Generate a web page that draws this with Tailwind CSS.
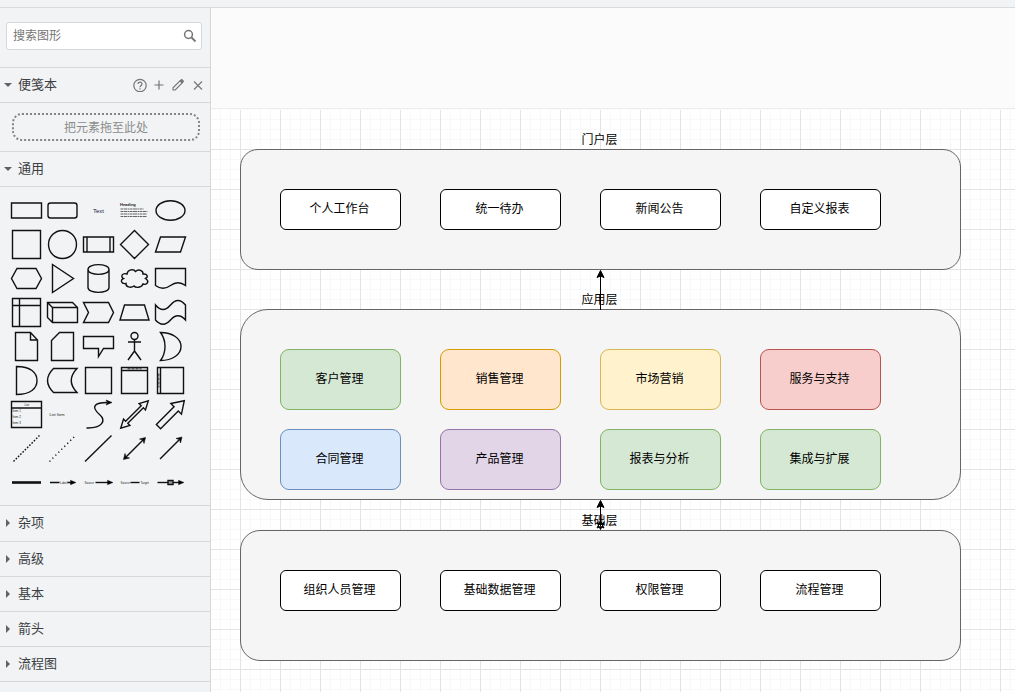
<!DOCTYPE html>
<html lang="zh-CN">
<head>
<meta charset="utf-8">
<meta name="viewport" content="width=device-width, initial-scale=1">
<title>架构图</title>
<script src="https://cdn.jsdelivr.net/npm/@tailwindcss/browser@4"></script>
</head>
<body class="flex h-screen flex-col overflow-hidden bg-[#fbfbfb] font-['Liberation_Sans','Noto_Sans_CJK_SC',sans-serif] text-[#3c4043]">
<header class="h-2 shrink-0 border-b border-[#d8dbdf] bg-[#f1f3f4]"></header>
<div class="flex min-h-0 flex-1">

<aside class="w-[211px] shrink-0 overflow-hidden border-r border-[#d5d7da] bg-[#f1f3f4] text-[13px] leading-5">
  <div class="border-b border-[#d5d7da] px-1.5 pt-3.5 pb-[17px] pr-2">
    <label class="flex h-7 items-center rounded-[3px] border border-[#d5d7da] bg-white pr-1 pl-1.5">
      <input type="text" placeholder="搜索图形" aria-label="搜索图形" class="min-w-0 flex-1 bg-transparent text-xs leading-4 outline-none placeholder:text-[#757575]">
      <svg class="size-3.5 shrink-0" viewBox="0 0 14 14" fill="none" stroke="#757575" stroke-width="1.5"><circle cx="5.5" cy="5.5" r="3.9"/><path d="M8.5 8.5L12.5 12.500" stroke-width="1.8"/></svg>
    </label>
  </div>

  <div class="flex h-[35px] items-center border-b border-[#d5d7da] pr-[5px]">
    <button class="flex flex-1 items-center gap-1.5 pl-1"><svg class="h-2 w-2" viewBox="0 0 8 8" fill="#5f6368"><path d="M0 2h8L4 6z"/></svg>便笺本</button>
    <div class="flex items-center gap-1.5 text-[#757575]">
      <button aria-label="帮助"><svg class="size-3.5" viewBox="0 0 14 14" fill="none" stroke="currentColor" stroke-width="1.2"><circle cx="7" cy="7.500" r="6.200"/><path d="M5 6.100C5 3.500 9 3.500 9 6C9 7.400 7 7.500 7 9.200M7 10.200V11.500"/></svg></button>
      <button aria-label="添加"><svg class="size-3" viewBox="0 0 12 12" stroke="currentColor" stroke-width="1.200"><path d="M1.500 6h9M6 1.500v9"/></svg></button>
      <button aria-label="编辑"><svg class="size-3.5" viewBox="0 0 14 14" fill="none" stroke="currentColor" stroke-width="1.100"><path d="M2 12V9.800L9 2.800L11.200 5L4.200 12z"/><path d="M9.500 2.500L10.800 1.500L12.500 3.200L11.500 4.500z" fill="currentColor"/></svg></button>
      <button aria-label="关闭"><svg class="size-3.5" viewBox="0 0 14 14" stroke="currentColor" stroke-width="1.100"><path d="M3 3.500l8 8M11 3.500l-8 8"/></svg></button>
    </div>
  </div>
  <div class="border-b border-[#d5d7da] py-2.5 pr-2.5 pl-3">
    <div class="relative flex h-7 items-center justify-center pt-0.5 text-xs text-[#8c8c8c]">
      <svg class="absolute inset-0 h-full w-full" fill="none" stroke="#858585" stroke-width="2" stroke-dasharray="2 2"><rect x="1" y="1" width="186" height="26" rx="9"/></svg>
      把元素拖至此处
    </div>
  </div>
  <div class="flex h-[35px] items-center border-b border-[#d5d7da]">
    <button class="flex flex-1 items-center gap-1.5 pl-1"><svg class="h-2 w-2" viewBox="0 0 8 8" fill="#5f6368"><path d="M0 2h8L4 6z"/></svg>通用</button>
  </div>

  <div id="shapes" class="grid grid-cols-[repeat(5,36px)] border-b border-[#d5d7da] pt-1.5 pb-1.5 pl-2"></div>

  <nav>
    <button class="flex h-9 w-full items-center gap-1.5 border-b border-[#d5d7da] pb-px pl-1"><svg class="h-2 w-2" viewBox="0 0 8 8" fill="#5f6368"><path d="M2 0v8l4-4z"/></svg>杂项</button>
    <button class="flex h-[35px] w-full items-center gap-1.5 border-b border-[#d5d7da] pl-1"><svg class="h-2 w-2" viewBox="0 0 8 8" fill="#5f6368"><path d="M2 0v8l4-4z"/></svg>高级</button>
    <button class="flex h-[35px] w-full items-center gap-1.5 border-b border-[#d5d7da] pl-1"><svg class="h-2 w-2" viewBox="0 0 8 8" fill="#5f6368"><path d="M2 0v8l4-4z"/></svg>基本</button>
    <button class="flex h-[35px] w-full items-center gap-1.5 border-b border-[#d5d7da] pl-1"><svg class="h-2 w-2" viewBox="0 0 8 8" fill="#5f6368"><path d="M2 0v8l4-4z"/></svg>箭头</button>
    <button class="flex h-[35px] w-full items-center gap-1.5 border-b border-[#d5d7da] pl-1"><svg class="h-2 w-2" viewBox="0 0 8 8" fill="#5f6368"><path d="M2 0v8l4-4z"/></svg>流程图</button>
  </nav>
</aside>

<main class="min-w-0 flex-1 pt-[100px]">
  <!-- Drawing page: free canvas with its grid -->
  <div class="relative h-full overflow-hidden border-t border-[#ececec] bg-white text-xs text-black">
    <svg class="absolute inset-0 h-full w-full">
      <defs>
        <pattern id="grid" x="29" y="40" width="40" height="40" patternUnits="userSpaceOnUse">
          <path d="M10.5 0V40M20.5 0V40M30.5 0V40M0 10.5H40M0 20.5H40M0 30.5H40" stroke="#f8f8f8"/>
          <path d="M.5 0V40M0 .5H40" stroke="#e3e3e3"/>
        </pattern>
      </defs>
      <rect y="1" width="100%" height="100%" fill="url(#grid)"/>
      <rect width="100%" height="1" fill="#fff"/>
      <rect x="0" y="0" width="100%" height="1" fill="#fbfbfb"/>
    </svg>

    <section class="absolute top-10 left-[29px] h-[121px] w-[721px] rounded-[18px] border border-[#666] bg-[#f5f5f5]"></section>
    <section class="absolute top-[200px] left-[29px] h-[191px] w-[721px] rounded-[28px] border border-[#666] bg-[#f5f5f5]"></section>
    <section class="absolute top-[421px] left-[29px] h-[131px] w-[721px] rounded-[20px] border border-[#666] bg-[#f5f5f5]"></section>

    <svg class="absolute top-0 left-[379px] h-[440px] w-5" viewBox="0 0 20 440" stroke="#000">
      <path d="M10.5 166V201M10.5 396V417"/>
      <path d="M10.5 161.500L14 168.500L10.5 167L7 168.500zM10.5 391.500L14 398.500L10.5 397L7 398.500zM10.5 420.500L14 413.500L10.5 415.500L7 413.500zM10.5 412L14 419L10.5 417.500L7 419z"/>
    </svg>

    <h2 class="absolute top-[21px] left-7 w-[721px] text-center leading-5">门户层</h2>
    <h2 class="absolute top-[181px] left-7 w-[721px] text-center leading-5">应用层</h2>
    <h2 class="absolute top-[402px] left-7 w-[721px] text-center leading-5">基础层</h2>

    <div class="absolute top-20 left-[69px] flex h-[41px] w-[121px] items-center justify-center rounded-md border border-black bg-white pr-0.5 pb-0.5">个人工作台</div>
    <div class="absolute top-20 left-[229px] flex h-[41px] w-[121px] items-center justify-center rounded-md border border-black bg-white pr-0.5 pb-0.5">统一待办</div>
    <div class="absolute top-20 left-[389px] flex h-[41px] w-[121px] items-center justify-center rounded-md border border-black bg-white pr-0.5 pb-0.5">新闻公告</div>
    <div class="absolute top-20 left-[549px] flex h-[41px] w-[121px] items-center justify-center rounded-md border border-black bg-white pr-0.5 pb-0.5">自定义报表</div>

    <div class="absolute top-60 left-[69px] flex h-[61px] w-[121px] items-center justify-center rounded-[9px] border border-[#82b366] bg-[#d5e8d4] pr-0.5 pb-0.5">客户管理</div>
    <div class="absolute top-60 left-[229px] flex h-[61px] w-[121px] items-center justify-center rounded-[9px] border border-[#d79b00] bg-[#ffe6cc] pr-0.5 pb-0.5">销售管理</div>
    <div class="absolute top-60 left-[389px] flex h-[61px] w-[121px] items-center justify-center rounded-[9px] border border-[#d6b656] bg-[#fff2cc] pr-0.5 pb-0.5">市场营销</div>
    <div class="absolute top-60 left-[549px] flex h-[61px] w-[121px] items-center justify-center rounded-[9px] border border-[#b85450] bg-[#f8cecc] pr-0.5 pb-0.5">服务与支持</div>

    <div class="absolute top-80 left-[69px] flex h-[61px] w-[121px] items-center justify-center rounded-[9px] border border-[#6c8ebf] bg-[#dae8fc] pr-0.5 pb-0.5">合同管理</div>
    <div class="absolute top-80 left-[229px] flex h-[61px] w-[121px] items-center justify-center rounded-[9px] border border-[#9673a6] bg-[#e1d5e7] pr-0.5 pb-0.5">产品管理</div>
    <div class="absolute top-80 left-[389px] flex h-[61px] w-[121px] items-center justify-center rounded-[9px] border border-[#82b366] bg-[#d5e8d4] pr-0.5 pb-0.5">报表与分析</div>
    <div class="absolute top-80 left-[549px] flex h-[61px] w-[121px] items-center justify-center rounded-[9px] border border-[#82b366] bg-[#d5e8d4] pr-0.5 pb-0.5">集成与扩展</div>

    <div class="absolute top-[461px] left-[69px] flex h-[41px] w-[121px] items-center justify-center rounded-md border border-black bg-white pr-0.5 pb-0.5">组织人员管理</div>
    <div class="absolute top-[461px] left-[229px] flex h-[41px] w-[121px] items-center justify-center rounded-md border border-black bg-white pr-0.5 pb-0.5">基础数据管理</div>
    <div class="absolute top-[461px] left-[389px] flex h-[41px] w-[121px] items-center justify-center rounded-md border border-black bg-white pr-0.5 pb-0.5">权限管理</div>
    <div class="absolute top-[461px] left-[549px] flex h-[41px] w-[121px] items-center justify-center rounded-md border border-black bg-white pr-0.5 pb-0.5">流程管理</div>
  </div>
</main>
</div>

<script>
// Stencils of the general palette, each drawn around its own centre.
const label = (x, y, size, text, extra = '') => `<text x="${x}" y="${y}" font-size="${size}" fill="#222" stroke="none" ${extra}>${text}</text>`;
const path = (d, extra = '') => `<path d="${d}" ${extra}/>`;
const stencils = [
  ['矩形', path('M-15-7.5H15V7.5H-15z')],
  ['圆角矩形', '<rect x="-14.5" y="-7.5" width="29" height="15" rx="2.5"/>'],
  ['文本', label(-5.5, 2, 6, 'Text', 'style="fill:#224"')],
  ['文本框', label(-14.5, -5, 4, 'Heading', 'font-weight="bold"') + path('M-14-1.500H9M-14 1H13M-14 3.500H12M-14 6H12', 'stroke-width=".9" stroke-dasharray="2.5 .5 4 .5 1.5 .5" stroke="#555"')],
  ['椭圆', '<ellipse rx="14.5" ry="9.7"/>'],
  ['正方形', path('M-14-14H14V14H-14z')],
  ['圆', '<circle r="14"/>'],
  ['过程', path('M-15-7.5H15V7.5H-15zM-11.5-7.5V7.5M11.5-7.5V7.5')],
  ['菱形', path('M0-14L14 0L0 14L-14 0z')],
  ['平行四边形', path('M-10-7.5H15L10 7.5H-15z')],
  ['六边形', path('M-9.5-10H9.5L15 0L9.5 10H-9.5L-15 0z')],
  ['三角形', path('M-10-14L11 0L-10 14z')],
  ['圆柱', path('M-10.5-9C-10.5-15.5 10.5-15.5 10.5-9V9C10.5 15.5-10.5 15.5-10.5 9zM-10.5-9C-10.5-2.500 10.5-2.500 10.5-9')],
  ['云', path('M-7.500-4.500C-7-9-1-10 1-7C4-10 9-8 8.500-4.500C13-5 14-1.500 11 0C15.500 3 12.500 7 8.500 5.500C7 9.500 1 9.500-.5 7.500C-4 10-9 8-8.500 5C-13.500 6-14.500 1-11 0C-14.500-2-12-6-7.500-4.500z')],
  ['文档', path('M-15-10H15V7Q7.5 1.500 0 7Q-7.5 12.500-15 7z')],
  ['内部存储', path('M-14-14H14V14H-14zM-7-14V14M-14-7H14')],
  ['立方体', path('M-15-10H10L15-5V10H-10L-15 5zM-15-10L-10-5H15M-10-5V10')],
  ['步骤', path('M-15-10H10L15 0L10 10H-15L-10 0z')],
  ['梯形', path('M-10-7.5H10L14.5 7.5H-14.5z')],
  ['磁带', path('M-15-7.5Q-7.5 1.500 0-7.5T15-7.5V7.5Q7.5-1 0 7.5T-15 7.5z')],
  ['便笺', path('M-11-14H4L11-6.5V14H-11zM4-14V-6.5H11')],
  ['卡片', path('M-3-14H11V14H-11V-6z')],
  ['标注', path('M-15-10H15V2H5L0 10V2H-15z')],
  ['角色', '<circle cy="-10.5" r="3.5"/>' + path('M0-7V4.500M-6.500-4.500H6.500M0 4.500L-6.500 13.500M0 4.500L6.500 13.500')],
  ['或', path('M-10-14C2-14 10.5-8 10.5 0C10.5 8 2 14-10 14C-4 6-4-6-10-14z')],
  ['与', path('M-10-14C4-14 10.5-8 10.5 0C10.5 8 4 14-10 14z')],
  ['数据存储', path('M-9-12H14.500Q3 0 14.500 12H-9Q-21 0-9-12z')],
  ['容器', path('M-13-13H13V13H-13z')],
  ['垂直容器', path('M-13-13H13V13H-13zM-13-10H13') + path('M-7-11.700H7', 'stroke="#555" stroke-dasharray="3 1"')],
  ['水平容器', path('M-13-13H13V13H-13zM-10-13V13') + path('M-11.700-7V7', 'stroke="#555" stroke-dasharray="3 1"')],
  ['列表', path('M-15-13H15V13H-15zM-15-6.500H15') + label(-2, -9, 3, 'List') + label(-14, -2.5, 3, 'Item 1') + label(-14, 3.5, 3, 'Item 2') + label(-14, 9.5, 3, 'Item 3')],
  ['列表项', label(-13, 1.5, 4, 'List Item')],
  ['曲线', path('M-12 13.500C4 14 8 6 1 0C-8-8-4-12 9-12') + path('M13.500-12L7.500-14.500L9-12L7.500-9.500z', 'fill="#000" stroke-width=".6"')],
  ['双向箭头', path('M-19.500 0L-11-4.500V-1.500H11V-4.500L19.500 0L11 4.500V1.500H-11V4.500z', 'transform="rotate(-45)"')],
  ['箭头', path('M-17-3H8V-7.500L19.500 0L8 7.500V3H-17z', 'transform="rotate(-45)"')],
  ['虚线', path('M-13 13L13-13', 'stroke-dasharray="1.6 1.6"')],
  ['点线', path('M-13 13L13-13', 'stroke-dasharray="1.2 3"')],
  ['直线', path('M-13.500 13L13-13')],
  ['双向连接线', path('M-9 9L9-9') + path('M-11 11L-9.500 5L-8.500 8.500L-5 9.500zM11-11L9.500-5L8.500-8.500L5-9.500z', 'fill="#000" stroke-width=".6"')],
  ['定向连接线', path('M-10.500 10.500L9-9') + path('M11.500-11.500L10-5.500L9-9L5.500-10z', 'fill="#000" stroke-width=".6"')],
  ['连接', path('M-14.500 0H14.500', 'stroke-width="2.6"')],
  ['带标签连接线', path('M-12.500 0H-3M5 0H10') + label(-2.5, 1, 3, 'Label') + path('M13.500 0L8-2.300V2.300z', 'fill="#000" stroke-width=".4"')],
  ['带两标签连接线', path('M-3 0H10') + label(-14, 1, 3, 'Source') + path('M14.500 0L9-2.300V2.300z', 'fill="#000" stroke-width=".4"')],
  ['带三标签连接线', path('M-4 0H5') + label(-14, 1, 3, 'Source') + label(6, 1, 3, 'Target')],
  ['带符号连接线', path('M-13 0H10') + path('M-2.500-2H2.500V2H-2.500z', 'fill="#999"') + path('M13.500 0L8-2.300V2.300z', 'fill="#000" stroke-width=".4"')],
];
document.getElementById('shapes').innerHTML = stencils.map(([name, art]) =>
  `<button class="block h-[34px] w-9" aria-label="${name}"><svg class="block h-[34px] w-9" viewBox="-18.5 -17.5 36 34" fill="none" stroke="#111" stroke-width="1.4">${art}</svg></button>`).join('');
</script>
</body>
</html>
